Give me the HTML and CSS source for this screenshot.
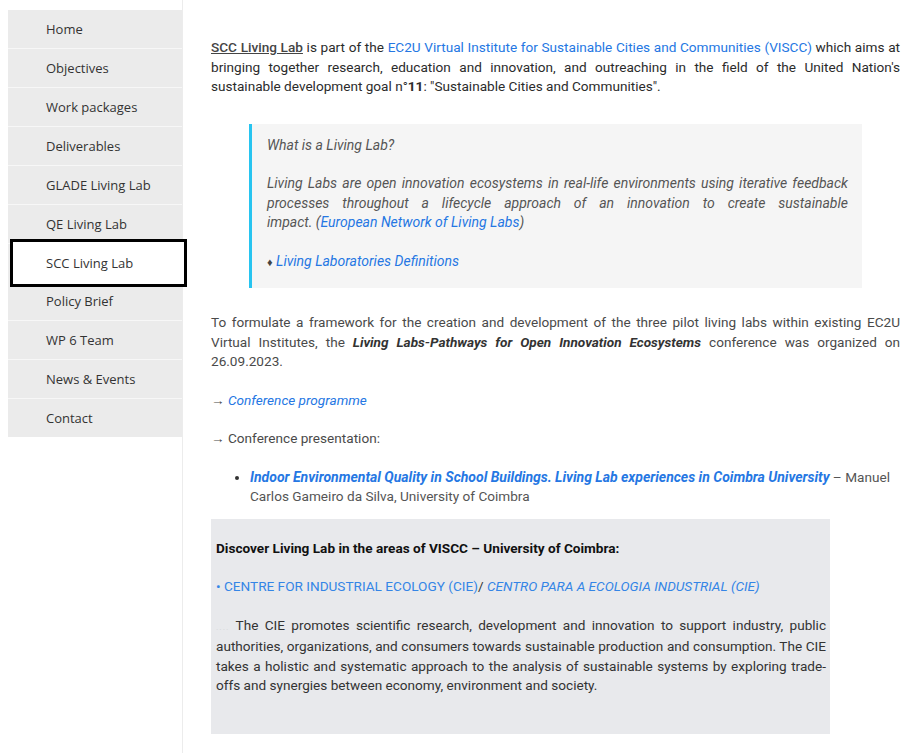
FILE: index.html
```html
<!DOCTYPE html>
<html lang="en">
<head>
<meta charset="utf-8">
<title>SCC Living Lab</title>
<link rel="stylesheet" href="styles.css">
</head>
<body>
<div class="page">
  <nav class="sidebar">
    <ul class="menu">
      <li class="menu-item"><a href="#">Home</a></li>
      <li class="menu-item"><a href="#">Objectives</a></li>
      <li class="menu-item"><a href="#">Work packages</a></li>
      <li class="menu-item"><a href="#">Deliverables</a></li>
      <li class="menu-item"><a href="#">GLADE Living Lab</a></li>
      <li class="menu-item"><a href="#">QE Living Lab</a></li>
      <li class="menu-item active"><a href="#">SCC Living Lab</a></li>
      <li class="menu-item"><a href="#">Policy Brief</a></li>
      <li class="menu-item"><a href="#">WP 6 Team</a></li>
      <li class="menu-item"><a href="#">News &amp; Events</a></li>
      <li class="menu-item"><a href="#">Contact</a></li>
    </ul>
  </nav>

  <main class="content">
    <p class="intro"><u class="lab-name">SCC Living Lab</u> is part of the <a href="#">EC2U Virtual Institute for Sustainable Cities and Communities (VISCC)</a> which aims at bringing together research, education and innovation, and outreaching in the field of the United Nation's sustainable development goal n°<b>11</b>: "Sustainable Cities and Communities".</p>

    <blockquote class="quote">
      <p>What is a Living Lab?</p>
      <p>Living Labs are open innovation ecosystems in real-life environments using iterative feedback processes throughout a lifecycle approach of an innovation to create sustainable <span class="keep">impact. (<a href="#">European Network of Living Labs</a>)</span></p>
      <p><span class="diamond">♦</span> <a href="#">Living Laboratories Definitions</a></p>
    </blockquote>

    <p class="body-text">To formulate a framework for the creation and development of the three pilot living labs within existing EC2U Virtual Institutes, the <b><i>Living Labs-Pathways for Open Innovation Ecosystems</i></b> conference was organized on 26.09.2023.</p>

    <p class="body-text">→ <a href="#"><i>Conference programme</i></a></p>

    <p class="body-text">→ Conference presentation:</p>

    <ul class="talks">
      <li><a href="#" class="talk-title"><b><i>Indoor Environmental Quality in School Buildings. Living Lab experiences in Coimbra University</i></b></a> – Manuel Carlos Gameiro da Silva, University of Coimbra</li>
    </ul>

    <section class="discover">
      <p class="discover-title">Discover Living Lab in the areas of VISCC – University of Coimbra:</p>
      <p><a href="#">• CENTRE FOR INDUSTRIAL ECOLOGY (CIE)</a>/ <a href="#"><i>CENTRO PARA A ECOLOGIA INDUSTRIAL (CIE)</i></a></p>
      <p class="cie"><span class="indent">....</span> The CIE promotes scientific research, development and innovation to support industry, public authorities, organizations, and consumers towards sustainable production and consumption. The CIE takes a holistic and systematic approach to the analysis of sustainable systems by exploring trade-offs and synergies between economy, environment and society.</p>
    </section>
  </main>
</div>
</body>
</html>
```

FILE: styles.css
```css
html, body {
  margin: 0;
  padding: 0;
  background: #fff;
}

.page {
  display: flex;
  align-items: stretch;
  min-height: 753px;
}

/* ---------- side navigation ---------- */
.sidebar {
  width: 174px;
  margin-left: 8px;
  padding-top: 10px;
  flex: none;
  position: relative;
  z-index: 2;
}

.menu {
  list-style: none;
  margin: 0;
  padding: 0;
  background: #ebebeb;
}

.menu-item {
  height: 38px;
  border-bottom: 1px solid #f7f7f7;
  box-sizing: content-box;
}

.menu-item:last-child {
  border-bottom: 0;
}

.menu-item a {
  display: flex;
  align-items: center;
  height: 100%;
  padding-left: 38px;
  font-family: "Open Sans", "DejaVu Sans", sans-serif;
  font-size: 13px;
  color: #333;
  text-decoration: none;
}

.menu-item.active {
  position: relative;
  background: #fff;
  height: 48px;
  box-sizing: border-box;
  border: 3px solid #000;
  margin: -5px -5px -5px 2px;
}

.menu-item.active a {
  padding-left: 33px;
}

/* ---------- main column ---------- */
.content {
  flex: 1;
  border-left: 1px solid #ececec;
  padding: 38px 15px 20px 28px;
  font-family: Roboto, "Liberation Sans", sans-serif;
  font-size: 13.6px;
  line-height: 19.5px;
  color: #333;
}

.content p {
  margin: 0;
}

.content a {
  color: #2577e3;
  text-decoration: none;
}

.intro {
  text-align: justify;
  color: #2b2b2b;
}

.lab-name {
  font-weight: 500;
  color: #444;
}

/* quote panel */
.quote {
  margin: 27px 38px 25px 38px;
  padding: 12px 14px 16px 15px;
  background: #f5f5f5;
  border-left: 3px solid #27c4f0;
  font-style: italic;
  font-size: 14px;
  color: #555;
  text-align: justify;
}

.quote p + p {
  margin-top: 19px;
}

/* the source credit stays together on its own line */
.keep {
  white-space: nowrap;
}

.diamond {
  font-style: normal;
  font-size: 11px;
  color: #444;
}

.body-text {
  color: #4a4a4a;
  text-align: justify;
}

.body-text + .body-text {
  margin-top: 19px;
}

.body-text b {
  color: #333;
}

.talks {
  margin: 19px 0 12px 0;
  padding-left: 39px;
  color: #555;
}

.talks li::marker {
  color: #333;
}

.talk-title {
  font-size: 14px;
}

/* VISCC area box */
.discover {
  margin-right: 70px;
  background: #e8e9ec;
  padding: 20px 4px 38px 5px;
  color: #333;
}

.discover a {
  color: #3485e6;
}

.discover p + p {
  margin-top: 19px;
}

.discover-title {
  font-weight: 700;
  color: #111;
}

.cie {
  text-align: justify;
}

.indent {
  color: #d4d5d8;
  font-size: 9px;
  letter-spacing: 1px;
}
```
